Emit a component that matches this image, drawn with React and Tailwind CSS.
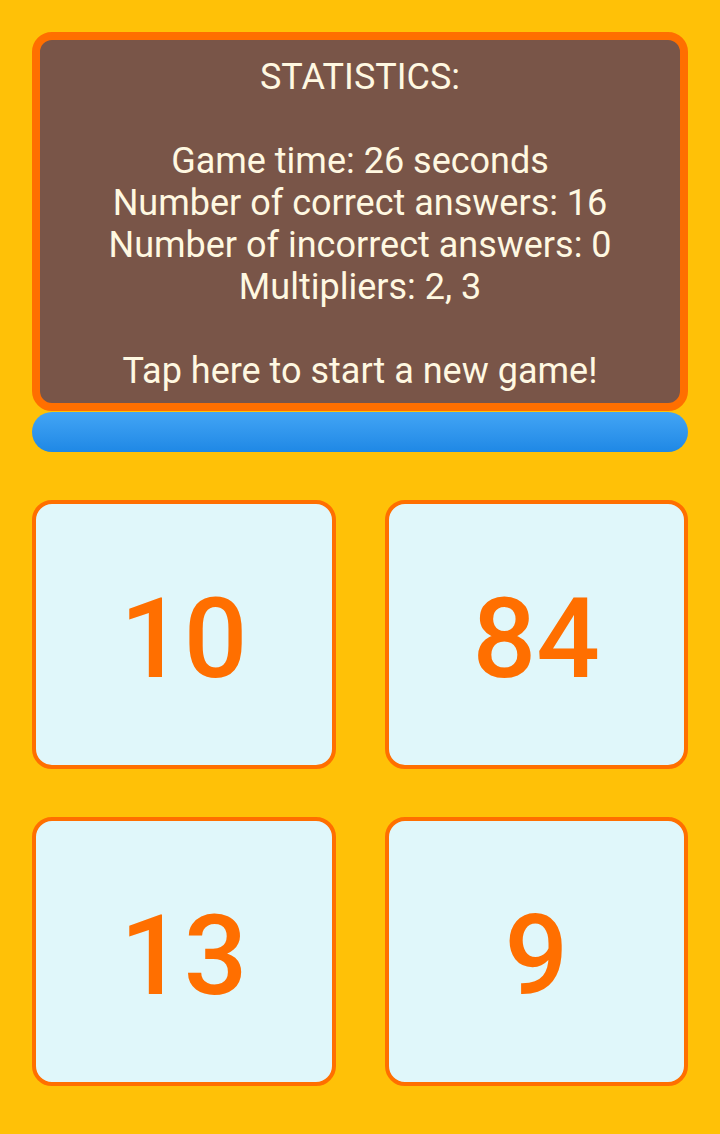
const answers = ["10", "84", "13", "9"];

export default function App() {
  return (
    <div
      className="min-h-[1134px] w-full bg-[#FFC107] px-8 pt-8 pb-12"
      style={{ fontFamily: "Roboto, 'Noto Sans', sans-serif" }}
    >
      {/* Statistics panel */}
      <div className="h-[379px] rounded-[20px] border-8 border-[#FF6F00] bg-[#795548] pt-4 text-center text-[36px] leading-[42px] text-[#FFF8E1]">
        <p>STATISTICS:</p>
        <p>&nbsp;</p>
        <p>Game time: 26 seconds</p>
        <p>Number of correct answers: 16</p>
        <p>Number of incorrect answers: 0</p>
        <p>Multipliers: 2, 3</p>
        <p>&nbsp;</p>
        <p>Tap here to start a new game!</p>
      </div>

      {/* Progress bar */}
      <div className="mt-px h-[40px] rounded-full bg-gradient-to-b from-[#42A5F5] to-[#1E88E5]" />

      {/* Answer cards */}
      <div className="mt-[48px] grid grid-cols-2 gap-x-[49px] gap-y-[48px]">
        {answers.map((n) => (
          <button
            key={n}
            className="flex h-[269px] items-center justify-center rounded-[20px] border-4 border-[#FF6F00] bg-[#E0F7FA] pt-2 text-[112px] font-medium text-[#FF6F00]"
          >
            {n}
          </button>
        ))}
      </div>
    </div>
  );
}
